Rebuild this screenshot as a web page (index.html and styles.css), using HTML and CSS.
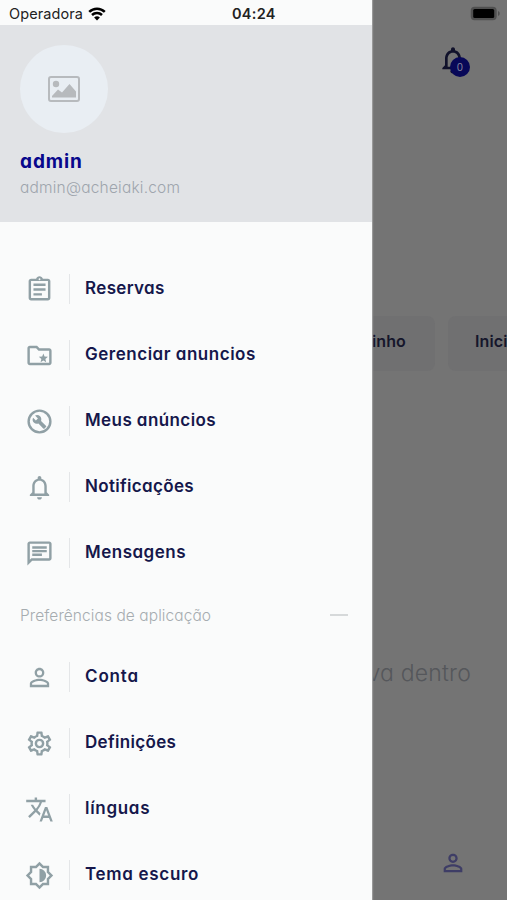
FILE: index.html
```html
<!DOCTYPE html>
<html lang="pt">
<head>
<meta charset="utf-8">
<title>Menu</title>
<link rel="stylesheet" href="styles.css">
</head>
<body>
<div class="screen">
  <aside class="drawer">
    <div class="status">
      <span class="carrier">Operadora</span>
      <svg class="wifi" viewBox="0 0 18 14"><path d="M1.2 4.8a11.2 11.2 0 0 1 15.6 0M4 8a7.2 7.2 0 0 1 10 0" fill="none" stroke="#000" stroke-width="2.5"/><path d="M9 13.6l-2.9-3a4.2 4.2 0 0 1 5.8 0z"/></svg>
      <span class="clock">04:24</span>
    </div>
    <header class="profile">
      <div class="avatar"><svg viewBox="0 0 32 26"><rect x="1" y="1" width="30" height="24" rx="2" fill="none" stroke="#b7babd" stroke-width="2"/><circle cx="8" cy="8" r="3.2"/><path d="M4 21.500v-1.500l6-6.500 4 3 7.500-8.500 6.500 7.500v6z"/></svg></div>
      <div class="name">admin</div>
      <div class="mail">admin@acheiaki.com</div>
    </header>
    <nav class="menu">
      <a class="row"><svg viewBox="0 0 24 24"><path d="M7 15h7v2H7zm0-4h10v2H7zm0-4h10v2H7zm12-4h-4.180C14.400 1.840 13.300 1 12 1s-2.400.84-2.820 2H5c-1.100 0-2 .9-2 2v14c0 1.100.9 2 2 2h14c1.100 0 2-.9 2-2V5c0-1.100-.9-2-2-2zm-7-.25c.41 0 .75.34.75.75s-.34.75-.75.75-.75-.34-.75-.75.34-.75.75-.75zM19 19H5V5h14v14z"/></svg><span class="label t1">Reservas</span></a>
      <a class="row"><svg viewBox="0 0 24 24"><path d="M20 6h-8l-2-2H4c-1.100 0-2 .9-2 2v12c0 1.100.9 2 2 2h16c1.100 0 2-.9 2-2V8c0-1.100-.9-2-2-2zm0 12H4V6h5.170l2 2H20v10z"/><path d="M13.060 17L15 15.720 16.940 17l-.56-2.280 1.770-1.520-2.330-.19L15 10.870l-.82 2.140-2.330.19 1.770 1.520z" transform="translate(-2.800 -2.800) scale(1.200)"/></svg><span class="label t2">Gerenciar anuncios</span></a>
      <a class="row"><svg viewBox="0 0 24 24"><circle cx="12" cy="12" r="9" fill="none" stroke="#90a0a5" stroke-width="2"/><path d="M17.500 15.700l-4.200-4.200c.5-1.300.2-2.800-.8-3.800-1.200-1.200-2.900-1.300-4.200-.6l2.400 2.400-1.700 1.600-2.300-2.300c-.7 1.300-.5 3 .6 4.100 1 1 2.500 1.300 3.800.8l4.200 4.200c.2.200.5.2.7 0l1.500-1.500c.2-.2.2-.5 0-.7z"/></svg><span class="label t3">Meus anúncios</span></a>
      <a class="row"><svg viewBox="0 0 24 24"><path d="M12 22c1.100 0 2-.9 2-2h-4c0 1.100.9 2 2 2zm6-6v-5c0-3.070-1.630-5.640-4.500-6.320V4c0-.83-.67-1.500-1.500-1.500s-1.500.67-1.500 1.500v.68C7.640 5.360 6 7.920 6 11v5l-2 2v1h16v-1l-2-2zm-2 1H8v-6c0-2.480 1.510-4.500 4-4.500s4 2.020 4 4.500v6z"/></svg><span class="label t4">Notificações</span></a>
      <a class="row"><svg viewBox="0 0 24 24"><path d="M4 4h16v12H5.170L4 17.170V4m0-2c-1.100 0-1.990.9-1.990 2L2 22l4-4h14c1.100 0 2-.9 2-2V4c0-1.100-.9-2-2-2H4zm2 10h8v2H6v-2zm0-3h12v2H6V9zm0-3h12v2H6V6z"/></svg><span class="label t5">Mensagens</span></a>
      <div class="section"><span>Preferências de aplicação</span><i></i></div>
      <a class="row prefs"><svg viewBox="0 0 24 24"><path d="M12 5.900a2.100 2.100 0 1 1 0 4.200 2.100 2.100 0 0 1 0-4.200m0 9c2.970 0 6.100 1.460 6.100 2.100v1.100H5.900V17c0-.64 3.130-2.100 6.100-2.100M12 4C9.790 4 8 5.790 8 8s1.790 4 4 4 4-1.790 4-4-1.790-4-4-4zm0 9c-2.670 0-8 1.340-8 4v3h16v-3c0-2.660-5.330-4-8-4z"/></svg><span class="label t6">Conta</span></a>
      <a class="row prefs"><svg viewBox="0 0 24 24"><path d="M19.430 12.980c.04-.32.07-.64.07-.98s-.03-.66-.07-.98l2.110-1.650c.19-.15.24-.42.12-.64l-2-3.460c-.12-.22-.39-.3-.61-.22l-2.490 1c-.52-.4-1.080-.73-1.690-.98l-.38-2.650C14.460 2.180 14.250 2 14 2h-4c-.25 0-.46.18-.49.42l-.38 2.650c-.61.25-1.170.59-1.690.98l-2.490-1c-.23-.09-.49 0-.61.22l-2 3.460c-.13.22-.07.49.12.64l2.110 1.650c-.04.32-.07.65-.07.98s.03.66.07.98l-2.110 1.650c-.19.15-.24.42-.12.640l2 3.460c.12.22.39.3.61.22l2.490-1c.52.4 1.080.73 1.690.98l.38 2.650c.03.240.24.42.49.42h4c.25 0 .46-.18.49-.42l.38-2.650c.61-.25 1.170-.59 1.690-.98l2.490 1c.23.09.49 0 .61-.22l2-3.460c.12-.22.07-.49-.12-.64l-2.110-1.650zm-1.980-1.710c.04.31.05.52.05.73s-.02.43-.05.73l-.14 1.130.89.7 1.080.84-.7 1.210-1.270-.51-1.040-.42-.9.68c-.43.32-.84.56-1.250.73l-1.060.43-.16 1.130-.2 1.350h-1.400l-.35-2.480-1.060-.43c-.43-.18-.83-.41-1.230-.71l-.91-.7-1.060.43-1.270.51-.7-1.210 1.080-.84.89-.7-.14-1.130c-.03-.31-.05-.54-.05-.74s.02-.43.05-.73l.14-1.130-.89-.7-1.080-.84.7-1.210 1.270.51 1.040.42.9-.68c.43-.32.84-.56 1.250-.73l1.060-.43.16-1.130.2-1.350h1.390l.35 2.480 1.060.43c.43.18.83.41 1.230.71l.91.7 1.060-.43 1.270-.51.7 1.210-1.070.85-.89.7.14 1.130zM12 8a4 4 0 1 0 0 8 4 4 0 0 0 0-8zm0 6a2 2 0 1 1 0-4 2 2 0 0 1 0 4z" fill-rule="evenodd"/></svg><span class="label t7">Definições</span></a>
      <a class="row prefs"><svg viewBox="0 0 24 24"><path d="M12.870 15.070l-2.540-2.510.03-.03A17.520 17.520 0 0 0 14.070 6H17V4h-7V2H8v2H1v2h11.170C11.500 7.920 10.440 9.750 9 11.350 8.070 10.320 7.300 9.190 6.690 8h-2c.73 1.630 1.730 3.170 2.980 4.560l-5.090 5.020L4 19l5-5 3.110 3.110.76-2.040zM18.500 10h-2L12 22h2l1.120-3h4.750L21 22h2l-4.500-12zm-2.620 7l1.620-4.330L19.120 17h-3.240z"/></svg><span class="label t8">línguas</span></a>
      <a class="row prefs"><svg viewBox="0 0 24 24"><path d="M20 15.310L23.310 12 20 8.690V4h-4.690L12 .69 8.690 4H4v4.690L.69 12 4 15.310V20h4.690L12 23.310 15.310 20H20v-4.690zm-2 2.690h-3.520L12 20.480 9.520 18H6v-3.520L3.520 12 6 9.520V6h3.520L12 3.520 14.480 6H18v3.520L20.480 12 18 14.480V18zM12 6.500v11a5.500 5.500 0 0 0 0-11z" fill-rule="evenodd"/></svg><span class="label t9">Tema escuro</span></a>
    </nav>
  </aside>
  <main class="page">
    <div class="battery"><svg viewBox="0 0 32 16"><rect x=".7" y=".7" width="26" height="13.600" rx="4" fill="#505050"/><rect x="3.200" y="3" width="21" height="9" rx="1.500" fill="#000"/><path d="M28 5c2.300 1 2.300 4 0 5z" fill="#505050"/></svg></div>
    <div class="bell"><svg viewBox="0 0 24 24"><path d="M18 16v-5c0-3.070-1.630-5.640-4.500-6.320V4c0-.83-.67-1.500-1.500-1.500s-1.500.67-1.500 1.500v.68C7.640 5.360 6 7.920 6 11v5l-2 2v1h16v-1l-2-2zm-2 1H8v-6c0-2.480 1.510-4.500 4-4.500s4 2.020 4 4.500v6zM10 20h4a2 2 0 0 1-4 0z"/></svg><b>0</b></div>
    <div class="chips"><span class="chip first">inho</span><span class="chip second">Inici</span></div>
    <p class="hint">va dentro</p>
    <div class="tab"><svg viewBox="0 0 24 24"><path d="M12 5.900a2.100 2.100 0 1 1 0 4.200 2.100 2.100 0 0 1 0-4.200m0 9c2.970 0 6.100 1.460 6.100 2.100v1.100H5.900V17c0-.64 3.130-2.100 6.100-2.100M12 4C9.790 4 8 5.790 8 8s1.790 4 4 4 4-1.790 4-4-1.790-4-4-4zm0 9c-2.670 0-8 1.340-8 4v3h16v-3c0-2.660-5.330-4-8-4z"/></svg></div>
  </main>
</div>
</body>
</html>
```
FILE: styles.css
```css
* { box-sizing: border-box; }
body { margin: 0; font-family: Inter, "Open Sans", sans-serif; font-feature-settings: "cv11" 1; }
svg { display: block; flex: none; }
.screen { display: flex; width: 507px; height: 900px; overflow: hidden; background: #747474; }
.drawer { width: 372px; height: 900px; flex: none; background: #fafbfb; overflow: hidden; box-shadow: 1px 0 1px #999; z-index: 1; }
.status { height: 25px; display: flex; align-items: center; padding: 2px 0 0 9px; color: #222; }
.carrier { width: 79px; font-size: 14.500px; letter-spacing: .1px; font-feature-settings: normal; }
.wifi { width: 18px; height: 14px; }
.clock { margin-left: 126px; font-size: 14.500px; font-weight: 600; letter-spacing: .3px; }
.profile { height: 197px; padding: 20px 20px 0; background: #e1e3e6; }
.avatar { width: 88px; height: 88px; border-radius: 50%; background: #e9eef3; display: flex; align-items: center; justify-content: center; }
.avatar svg { width: 32px; height: 26px; fill: #b7babd; }
.name { margin-top: 16px; height: 26px; line-height: 26px; font-size: 19px; letter-spacing: .9px; font-weight: 700; color: #08088c; }
.mail { height: 25px; line-height: 25px; font-size: 15.500px; letter-spacing: .2px; font-weight: 300; color: #9ea5ad; white-space: nowrap; }
.menu { padding-top: 34px; }
.row { display: flex; align-items: center; height: 66px; padding-left: 25px; }
.row svg { width: 29px; height: 29px; fill: #90a0a5; }
.label { height: 30px; line-height: 28px; margin-left: 15px; padding-left: 15px; border-left: 1px solid #e4e6e8; font-size: 17px; font-weight: 600; color: #15174b; white-space: nowrap; }
.prefs .label { line-height: 29px; }
.t1 { letter-spacing: .35px; }
.t2 { letter-spacing: .52px; }
.t3 { letter-spacing: .42px; }
.t4 { letter-spacing: .33px; }
.t5 { letter-spacing: .5px; }
.t6 { letter-spacing: .85px; }
.t7 { letter-spacing: .33px; }
.t8 { letter-spacing: .7px; }
.t9 { letter-spacing: .68px; }
.section { height: 58px; display: flex; align-items: center; justify-content: space-between; padding: 0 24px 0 20px; font-size: 15.500px; letter-spacing: .08px; font-weight: 300; color: #a6acb0; }
.section i { width: 18px; height: 2px; background: #d6d9da; }
.page { width: 135px; display: flex; flex-direction: column; overflow: hidden; }
.battery { height: 25px; padding: 6px 0 0 98px; }
.battery svg { width: 32px; height: 16px; }
.bell { position: relative; height: 291px; padding: 18px 0 0 65px; }
.bell svg { width: 32px; height: 34px; fill: #11122b; }
.bell b { position: absolute; left: 78px; top: 32px; width: 20px; height: 20px; border-radius: 50%; background: #080858; color: #85859c; font-size: 10px; line-height: 20px; font-weight: 400; text-align: center; }
.chips { display: flex; gap: 13px; height: 55px; }
.chip { flex: none; height: 55px; line-height: 51px; background: #707071; font-size: 16px; font-weight: 600; letter-spacing: .1px; color: #15162b; }
.first { width: 63px; border-radius: 0 8px 8px 0; }
.second { width: 90px; padding-left: 27px; border-radius: 8px; }
.hint { margin: 286px 36px 0 0; height: 32px; line-height: 32px; display: flex; justify-content: flex-end; font-size: 23px; letter-spacing: .2px; font-weight: 300; color: #55575b; white-space: nowrap; }
.tab { margin-top: 160px; padding-left: 67px; }
.tab svg { width: 28px; height: 28px; fill: #3e3d66; }
```
